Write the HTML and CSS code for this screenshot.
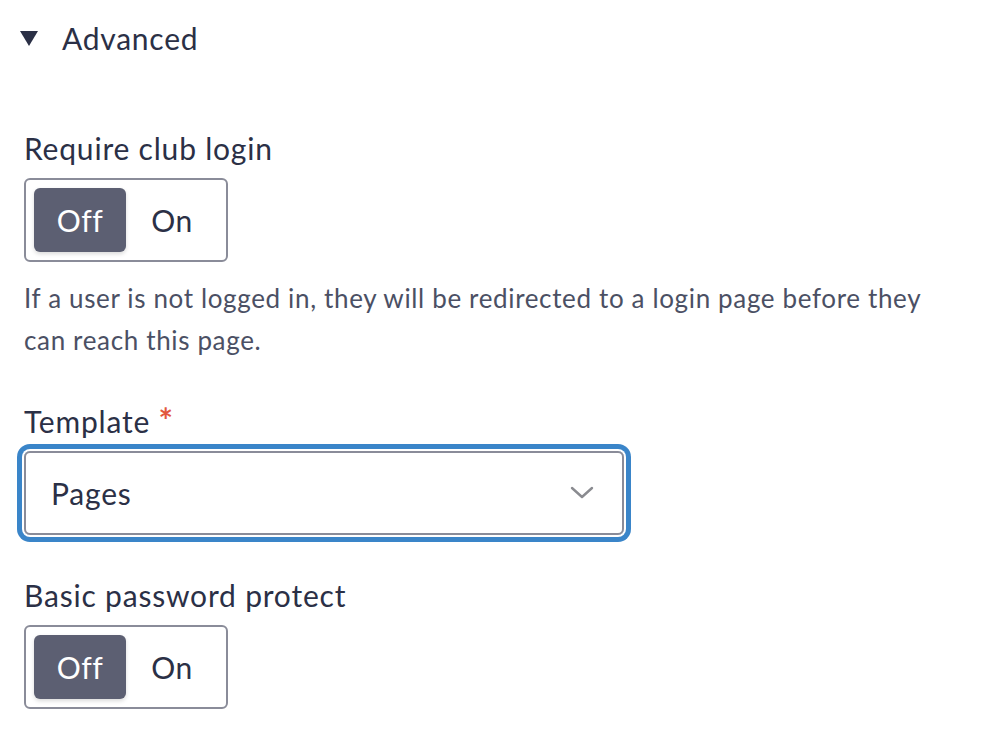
FILE: index.html
```html
<!DOCTYPE html>
<html>
<head>
<meta charset="utf-8">
<link rel="stylesheet" href="styles.css">
</head>
<body>
<div class="page">
  <div class="summary">
    <svg class="caret" width="18" height="15" viewBox="0 0 18 15"><polygon points="0,0 18,0 9,15" fill="#2b3046"/></svg>
    <span class="summary-text">Advanced</span>
  </div>

  <div class="field field-first">
    <div class="label">Require club login</div>
    <div class="toggle">
      <span class="opt opt-active">Off</span>
      <span class="opt">On</span>
    </div>
    <p class="help">If a user is not logged in, they will be redirected to a login page before they can reach this page.</p>
  </div>

  <div class="field">
    <div class="label">Template <span class="req">*</span></div>
    <div class="select">
      <span class="select-value">Pages</span>
      <svg class="chev" width="24" height="14" viewBox="0 0 24 14"><polyline points="2,2 12,11 22,2" fill="none" stroke="#8a8b90" stroke-width="2.4" stroke-linecap="round" stroke-linejoin="round"/></svg>
    </div>
  </div>

  <div class="field">
    <div class="label">Basic password protect</div>
    <div class="toggle">
      <span class="opt opt-active">Off</span>
      <span class="opt">On</span>
    </div>
  </div>
</div>
</body>
</html>
```

FILE: styles.css
```css
html, body {
  margin: 0;
  padding: 0;
  background: #ffffff;
}
body {
  font-family: Lato, "Open Sans", sans-serif;
  color: #2b3046;
}
.page {
  padding: 18px 0 0 24px;
  width: 930px;
}
.summary {
  display: flex;
  align-items: center;
  height: 40px;
}
.caret {
  margin-left: -4px;
  margin-right: 24px;
}
.summary-text {
  font-size: 30px;
  letter-spacing: 0.75px;
}
.field-first {
  margin-top: 72px;
}
.field {
  margin-bottom: 42px;
}
.label {
  font-size: 30px;
  letter-spacing: 0.8px;
  line-height: 36px;
  height: 36px;
  margin-bottom: 12px;
}
.req {
  color: #e2583e;
  font-size: 34px;
  font-weight: 700;
  line-height: 0;
}
.toggle {
  display: inline-flex;
  align-items: center;
  box-sizing: border-box;
  width: 204px;
  height: 84px;
  border: 2px solid #8a8c99;
  border-radius: 6px;
  padding: 8px;
  vertical-align: top;
}
.opt {
  display: flex;
  align-items: center;
  justify-content: center;
  width: 92px;
  height: 64px;
  font-size: 30px;
  letter-spacing: 0.5px;
  color: #2b3046;
  border-radius: 6px;
}
.opt-active {
  background: #5c5f72;
  color: #ffffff;
  box-shadow: 0 2px 4px rgba(0,0,0,0.15);
}
.help {
  margin: 15px 0 0 0;
  font-size: 26px;
  letter-spacing: 0.65px;
  line-height: 42px;
  color: #4b5064;
}
.select {
  box-sizing: border-box;
  width: 600px;
  height: 84px;
  border: 2px solid #8a8c99;
  border-radius: 6px;
  box-shadow: 0 0 0 2px #ffffff, 0 0 0 7px #3a85c9;
  display: flex;
  align-items: center;
  justify-content: space-between;
  padding: 0 28px 0 25px;
}
.select-value {
  font-size: 30px;
  letter-spacing: 0.8px;
}
```
